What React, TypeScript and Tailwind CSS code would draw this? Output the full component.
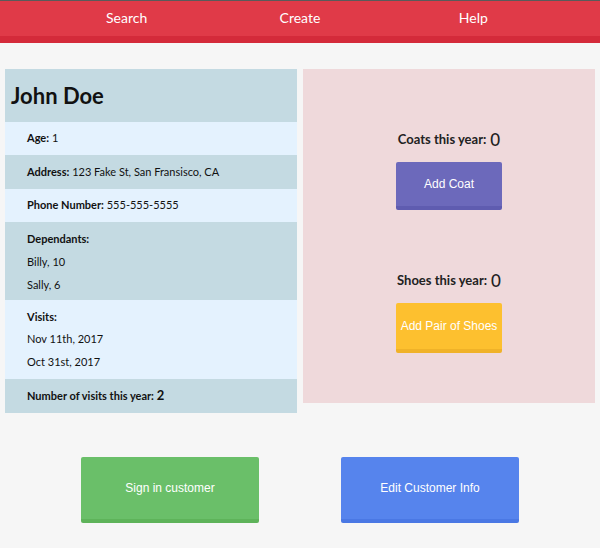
import React from 'react';

const sans = "font-['Lato','Noto_Sans',sans-serif]";
const btnFont = "font-['Liberation_Sans',Arial,sans-serif]";

function InfoRow({ dark, children, className = '' }: { dark?: boolean; children: React.ReactNode; className?: string }) {
  return (
    <div className={`${dark ? 'bg-[#c4dae2]' : 'bg-[#e4f2fe]'} px-[22px] flex flex-col justify-center text-[11px] text-[#111] ${className}`}>
      {children}
    </div>
  );
}

function ActionButton({ label, className }: { label: string; className: string }) {
  return (
    <button className={`${btnFont} text-white text-[12px] rounded-[2px] border-b-4 ${className}`}>
      {label}
    </button>
  );
}

export default function App() {
  return (
    <div className={`min-h-[548px] bg-[#f6f6f6] ${sans}`}>
      <nav className="border-t border-[#5a5a5a] bg-[#e03a48] border-b-[7px] border-b-[#d42a3a]">
        <div className="flex h-[35px] items-center pb-[3px] px-[40px] text-white text-[14px]">
          {['Search', 'Create', 'Help'].map((item) => (
            <a key={item} className="w-[175px] text-center">
              {item}
            </a>
          ))}
        </div>
      </nav>

      <div className="flex items-start gap-[6px] px-[5px] mt-[26px]">
        <div className="w-[292px] flex flex-col">
          <div className="h-[53px] bg-[#c4dae2] flex items-center px-[6px] text-[22px] font-bold text-[#111]">John Doe</div>
          <InfoRow className="h-[33px]">
            <p><b>Age:</b> 1</p>
          </InfoRow>
          <InfoRow dark className="h-[34px]">
            <p><b>Address:</b> 123 Fake St, San Fransisco, CA</p>
          </InfoRow>
          <InfoRow className="h-[33px]">
            <p><b>Phone Number:</b> 555-555-5555</p>
          </InfoRow>
          <InfoRow dark className="h-[78px] leading-[23px]">
            <p className="font-bold">Dependants:</p>
            <p>Billy, 10</p>
            <p>Sally, 6</p>
          </InfoRow>
          <InfoRow className="h-[79px] leading-[22.5px]">
            <p className="font-bold">Visits:</p>
            <p>Nov 11th, 2017</p>
            <p>Oct 31st, 2017</p>
          </InfoRow>
          <InfoRow dark className="h-[34px]">
            <p className="font-bold">
              Number of visits this year: <span className="text-[13px]">2</span>
            </p>
          </InfoRow>
        </div>

        <div className="w-[292px] h-[334px] bg-[#efd9db] flex flex-col items-center pt-[61px]">
          <p className="h-[20px] flex items-center gap-[4px] text-[#222] font-bold text-[13px]">
            Coats this year: <span className="text-[17px] font-medium">0</span>
          </p>
          <ActionButton label="Add Coat" className="mt-[12px] w-[106px] h-[48px] bg-[#6c69bb] border-b-[#5f5cb0]" />
          <p className="mt-[61px] h-[20px] flex items-center gap-[4px] text-[#222] font-bold text-[13px]">
            Shoes this year: <span className="text-[17px] font-medium">0</span>
          </p>
          <ActionButton label="Add Pair of Shoes" className="mt-[12px] w-[106px] h-[50px] bg-[#fdc02f] border-b-[#f0b228]" />
        </div>
      </div>

      <div className="flex justify-center gap-[82px] mt-[44px]">
        <ActionButton label="Sign in customer" className="w-[178px] h-[66px] bg-[#6abf69] border-b-[#5eb35a]" />
        <ActionButton label="Edit Customer Info" className="w-[178px] h-[66px] bg-[#5684ed] border-b-[#4a78e4]" />
      </div>
    </div>
  );
}
